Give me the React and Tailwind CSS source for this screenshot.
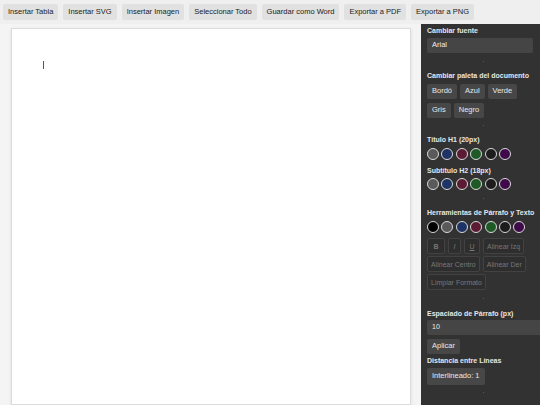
import React from "react";

const TOOLBAR = [
  "Insertar Tabla",
  "Insertar SVG",
  "Insertar Imagen",
  "Seleccionar Todo",
  "Guardar como Word",
  "Exportar a PDF",
  "Exportar a PNG",
];

const H_COLORS = ["#5a5a5a", "#1e3466", "#5c1a33", "#1d5a26", "#1c1c1c", "#3f0a4a"];
const P_COLORS = ["#000000", "#5a5a5a", "#1e3466", "#5c1a33", "#1d5a26", "#1c1c1c", "#3f0a4a"];

function Label({ children }) {
  return <div className="text-[7px] font-bold text-[#e6e6e6] leading-none">{children}</div>;
}

// tiny separator between sidebar groups
function Dot({ before = 3, after = 5 }) {
  return (
    <div style={{ paddingTop: before, paddingBottom: after }}>
      <div className="flex justify-center py-[5px]">
        <div className="w-[1px] h-[1px] bg-[#5a5a5a]"></div>
      </div>
    </div>
  );
}

function Swatches({ colors }) {
  return (
    <div className="flex gap-[2.4px]">
      {colors.map((c, i) => (
        <div
          key={i}
          className="w-[12px] h-[12px] rounded-full border border-[#d8d8d8]"
          style={{ backgroundColor: c }}
        ></div>
      ))}
    </div>
  );
}

function DarkBtn({ children }) {
  return (
    <button className="h-[15px] px-[5px] rounded-[2px] bg-[#474747] text-[7.5px] text-[#e8e8e8] leading-none">
      {children}
    </button>
  );
}

function OffBtn({ children }) {
  return (
    <button className="h-[16px] px-[3px] rounded-[2px] bg-[#2e2e2e] border border-[#424242] text-[7px] text-[#777] leading-none whitespace-nowrap">
      {children}
    </button>
  );
}

export default function App() {
  return (
    <div
      className="w-[540px] h-[405px] overflow-hidden flex flex-col bg-[#f4f4f4]"
      style={{ fontFamily: '"Liberation Sans", Arial, sans-serif' }}
    >
      {/* toolbar */}
      <div className="h-[24px] flex items-center gap-[5px] px-[3px] bg-[#efefef] shrink-0">
        {TOOLBAR.map((t) => (
          <button
            key={t}
            className="h-[16px] px-[5px] rounded-[2px] bg-[#e1e1e1] text-[7.5px] text-[#222] leading-none"
          >
            {t}
          </button>
        ))}
      </div>

      <div className="flex-1 flex min-h-0">
        {/* page */}
        <div className="flex-1 pl-[11px] pr-[10px] pt-[4px] min-h-0">
          <div className="h-full w-[400px] bg-white border border-[#dcdcdc] shadow-sm pl-[31px] pt-[32px]">
            <div className="w-[1px] h-[8px] bg-[#555]"></div>
          </div>
        </div>

        {/* sidebar */}
        <div className="w-[119px] shrink-0 bg-[#323232] pl-[6px] pt-[3px]">
          <Label>Cambiar fuente</Label>
          <div className="mt-[3.5px] w-[106px] h-[15px] rounded-[2px] bg-[#454545] flex items-center px-[5px] text-[7.5px] text-[#eee]">
            Arial
          </div>
          <Dot before={3} after={5.5} />

          <Label>Cambiar paleta del documento</Label>
          <div className="flex flex-wrap gap-x-[3px] gap-y-[4px] mt-[4.5px] w-[95px]">
            <DarkBtn>Bordó</DarkBtn>
            <DarkBtn>Azul</DarkBtn>
            <DarkBtn>Verde</DarkBtn>
            <DarkBtn>Gris</DarkBtn>
            <DarkBtn>Negro</DarkBtn>
          </div>
          <Dot before={2.5} after={5} />

          <Label>Título H1 (20px)</Label>
          <div className="mt-[4.5px]">
            <Swatches colors={H_COLORS} />
          </div>
          <div className="mt-[7.5px]">
            <Label>Subtítulo H2 (18px)</Label>
          </div>
          <div className="mt-[3.5px]">
            <Swatches colors={H_COLORS} />
          </div>
          <Dot before={3} after={5.5} />

          <Label>Herramientas de Párrafo y Texto</Label>
          <div className="mt-[5px]">
            <Swatches colors={P_COLORS} />
          </div>
          <div className="flex flex-wrap gap-x-[3px] gap-y-[2px] mt-[5px] w-[106px]">
            <OffBtn>
              <span className="font-bold px-[2.5px]">B</span>
            </OffBtn>
            <OffBtn>
              <span className="italic px-[1.5px]">I</span>
            </OffBtn>
            <OffBtn>
              <span className="underline px-[1.5px]">U</span>
            </OffBtn>
            <OffBtn>Alinear Izq</OffBtn>
            <OffBtn>Alinear Centro</OffBtn>
            <OffBtn>Alinear Der</OffBtn>
            <OffBtn>Limpiar Formato</OffBtn>
          </div>
          <Dot before={3} after={5.5} />

          <Label>Espaciado de Párrafo (px)</Label>
          <div className="mt-[3px] w-[120px] h-[15px] rounded-[2px] bg-[#454545] flex items-center px-[5px] text-[7px] text-[#eee]">
            10
          </div>
          <button className="block mt-[4px] h-[15px] px-[5px] rounded-[2px] bg-[#474747] text-[7.5px] text-[#e8e8e8] leading-none">
            Aplicar
          </button>
          <div className="mt-[3.5px]">
            <Label>Distancia entre Líneas</Label>
          </div>
          <button className="block mt-[3.5px] h-[17px] px-[5px] rounded-[2px] bg-[#474747] text-[7.5px] text-[#e8e8e8] leading-none">
            Interlineado: 1
          </button>
          <Dot before={2} after={0} />
        </div>
      </div>
    </div>
  );
}
